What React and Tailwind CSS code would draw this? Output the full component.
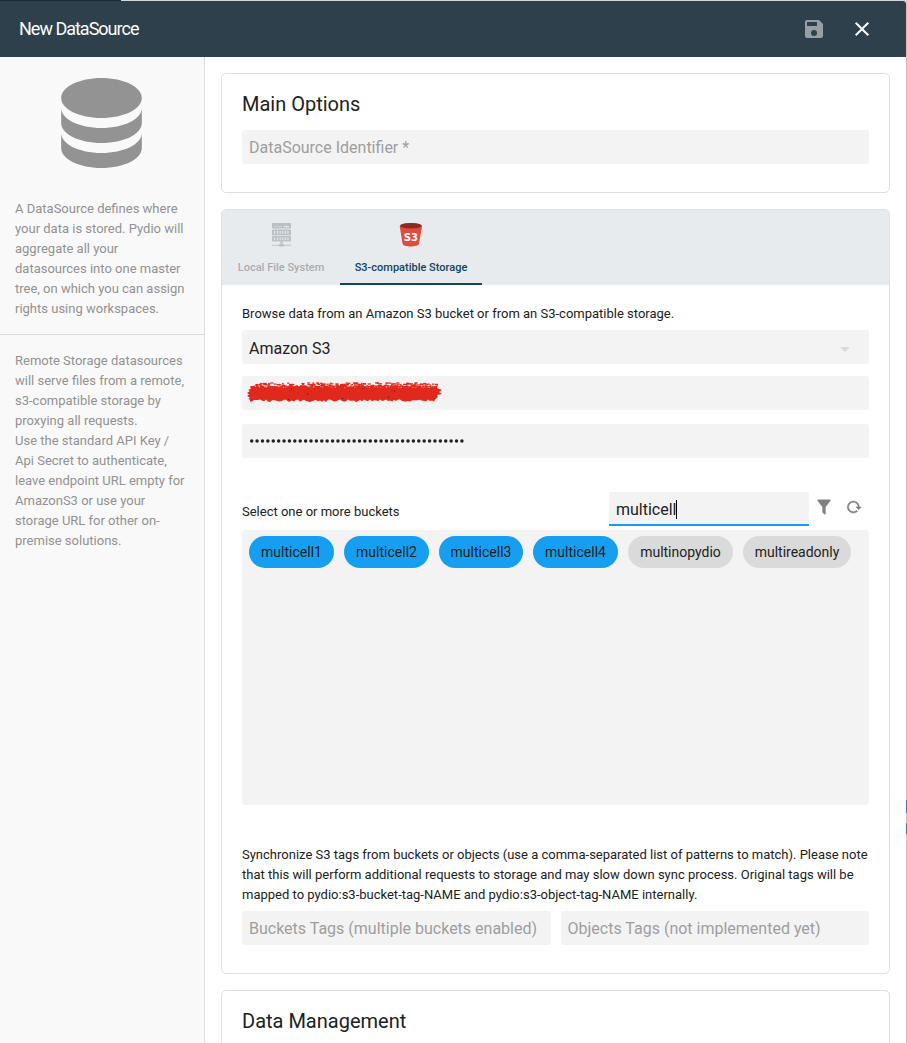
const MDI = {
  database:
    'M12 3C7.58 3 4 4.79 4 7s3.58 4 8 4 8-1.79 8-4-3.58-4-8-4M4 9v3c0 2.21 3.58 4 8 4s8-1.79 8-4V9c0 2.21-3.58 4-8 4s-8-1.79-8-4m0 5v3c0 2.21 3.58 4 8 4s8-1.79 8-4v-3c0 2.21-3.58 4-8 4s-8-1.79-8-4z',
  save: 'M15 9H5V5h10m-3 14a3 3 0 0 1-3-3 3 3 0 0 1 3-3 3 3 0 0 1 3 3 3 3 0 0 1-3 3m5-16H5a2 2 0 0 0-2 2v14a2 2 0 0 0 2 2h14a2 2 0 0 0 2-2V7l-4-4z',
  close:
    'M19 6.41L17.59 5 12 10.59 6.41 5 5 6.41 10.59 12 5 17.59 6.41 19 12 13.41 17.59 19 19 17.59 13.41 12z',
  filter:
    'M14 12v7.88c.04.3-.06.62-.29.83a.996.996 0 0 1-1.41 0l-2.01-2.01a.989.989 0 0 1-.29-.83V12h-.03L4.21 4.62a1 1 0 0 1 .17-1.4c.19-.14.4-.22.62-.22h14c.22 0 .43.08.62.22a1 1 0 0 1 .17 1.4L14.03 12z',
  reload:
    'M2 12a9 9 0 0 0 9 9c2.39 0 4.68-.94 6.4-2.6l-1.5-1.5A6.706 6.706 0 0 1 11 19c-6.24 0-9.36-7.54-4.95-11.95C10.46 2.64 18 5.77 18 12h-3l4 4h.1l3.9-4h-3a9 9 0 0 0-18 0z',
  menuDown: 'M7 10l5 5 5-5z',
};

function Icon({ name, className }) {
  return (
    <svg viewBox="0 0 24 24" fill="currentColor" className={className}>
      <path d={MDI[name]} />
    </svg>
  );
}

function ServerIcon() {
  return (
    <svg viewBox="0 0 20 25" className="h-[25px] w-5 text-[#b9c1c6]">
      <g fill="currentColor">
        <rect x="1" y="1" width="19" height="5.6" rx="0.8" />
        <rect x="1" y="7.4" width="19" height="5.8" rx="0.8" />
        <rect x="1" y="14" width="19" height="5.6" rx="0.8" />
        <rect x="9.5" y="19" width="2" height="4" />
        <rect x="1" y="22.8" width="19" height="0.9" />
        <rect x="8" y="22" width="5" height="2.6" rx="1" />
      </g>
      <g fill="#e8ebee">
        <rect x="3" y="4.3" width="8" height="0.4" />
        <rect x="13" y="4" width="5" height="1.2" />
        {[3, 6, 8.6, 11.2, 13.8, 16.4].map((x) => (
          <g key={x}>
            <rect x={x} y="9" width="1.1" height="2.8" />
            <rect x={x} y="15.4" width="1.1" height="2.8" />
          </g>
        ))}
      </g>
    </svg>
  );
}

function BucketIcon() {
  return (
    <svg viewBox="0 0 24 25" className="h-[25px] w-6">
      <path d="M0.7 4.2 L3.6 21.8 C4 25.4 19.4 25.4 20 21.8 L23 4.2z" fill="#e04b3e" />
      <ellipse cx="11.9" cy="4" rx="11.2" ry="3" fill="#e04b3e" />
      <ellipse cx="11.9" cy="3.8" rx="10.8" ry="2.8" fill="#8a2b23" />
      <text
        x="12"
        y="18.6"
        textAnchor="middle"
        textLength="14.4"
        lengthAdjust="spacingAndGlyphs"
        className="fill-white font-['DejaVu_Sans'] text-[11px] font-bold"
      >
        S3
      </text>
    </svg>
  );
}

// Deterministic noise, so the strokes stay the same on every render.
const noise = (n) => {
  const v = Math.sin(n * 127.1 + 11.7) * 43758.5453;
  return v - Math.floor(v);
};

function Redaction() {
  const top = [];
  const bottom = [];
  for (let i = 0; i <= 92; i++) {
    const x = 4 + i * 2;
    top.push(`${x},${(2.4 + noise(i) * 2.2).toFixed(1)}`);
    bottom.unshift(`${(x - 1).toFixed(1)},${(17.4 + noise(i + 200) * 2.6).toFixed(1)}`);
  }
  const right = '191,3 190,6 195,8 192,10 195,12 190,13 191,15 188,17.5';
  const left = '3,18 1.5,17 3,15.5 0,14 2,12.5 0,11 3,9 1,8 4,6.5 3,5';
  return (
    <svg viewBox="0 0 195 22" className="h-[22px] w-[195px]">
      <polygon points={`${top.join(' ')} ${right} ${bottom.join(' ')} ${left}`} fill="#e0281c" />
      {Array.from({ length: 120 }, (_, i) => (
        <rect
          key={i}
          x={5 + noise(i + 400) * 184}
          y={0.3 + noise(i + 600) * 2.4}
          width={1.5 + noise(i + 700) * 2}
          height="1.2"
          fill="#e0281c"
        />
      ))}
      {Array.from({ length: 50 }, (_, i) => (
        <rect
          key={i}
          x={6 + noise(i + 800) * 180}
          y={3.2 + noise(i + 900) * 2.2}
          width="1"
          height="0.8"
          fill="#f6b5b0"
        />
      ))}
      {[[44, 6.5], [60, 11.5], [41, 17], [95, 16], [147, 8.5], [141, 14.8], [115, 5.5]].map(([x, y]) => (
        <rect key={x} x={x} y={y} width="1.1" height="1.1" fill="#5b1714" />
      ))}
    </svg>
  );
}

function Card({ className = '', children }) {
  return (
    <section className={`overflow-hidden rounded-[5px] border border-[#e0e0e0] bg-white ${className}`}>
      {children}
    </section>
  );
}

function Field({ className = '', children }) {
  return (
    <div className={`flex h-[34px] items-center rounded-[3px] bg-[#f3f3f3] px-[7px] text-base ${className}`}>
      {children}
    </div>
  );
}

const BUCKETS = [
  { name: 'multicell1', selected: true, width: 'w-[85px]' },
  { name: 'multicell2', selected: true, width: 'w-[85px]' },
  { name: 'multicell3', selected: true, width: 'w-[84px]' },
  { name: 'multicell4', selected: true, width: 'w-[85px]' },
  { name: 'multinopydio', selected: false, width: 'w-[105px]' },
  { name: 'multireadonly', selected: false, width: 'w-[108px]' },
];

export default function App() {
  return (
    <div className="flex h-[1043px] w-[907px] flex-col overflow-hidden bg-white font-[Roboto,sans-serif] text-[#212121]">
      <div className="flex h-px shrink-0 bg-[#d3d6d8]">
        <div className="w-[121px] bg-[#1a2b38]" />
      </div>
      <div className="flex min-h-0 flex-1">
        <div className="flex w-[906px] flex-col">
          <header className="flex h-14 shrink-0 items-center rounded-tr-[3px] bg-[#2e404b] pr-8 pl-[19px] text-white">
            <h1 className="flex-1 pb-px text-[18px] tracking-[-1px]">New DataSource</h1>
            <Icon name="save" className="mr-6 size-6 text-[#979fa5]" />
            <Icon name="close" className="size-6" />
          </header>

          <div className="flex min-h-0 flex-1">
            <aside className="w-[205px] shrink-0 border-r border-[#dcdcdc] bg-[#f9f9f9] text-[13px] leading-5 whitespace-nowrap text-[#929292]">
              <svg viewBox="0 0 24 24" preserveAspectRatio="none" className="mt-[6px] ml-[41px] h-[120px] w-[121px] fill-[#939393]">
                <path d={MDI.database} />
              </svg>
              <p className="mt-4 border-b border-[#dcdcdc] px-[15px] pb-[15px]">
                A DataSource defines where<br />your data is stored. Pydio will<br />aggregate all your<br />
                datasources into one master<br />tree, on which you can assign<br />rights using workspaces.
              </p>
              <p className="px-[15px] pt-4">
                Remote Storage datasources<br />will serve files from a remote,<br />s3-compatible storage by<br />
                proxying all requests.<br />Use the standard API Key /<br />Api Secret to authenticate,<br />
                leave endpoint URL empty for<br />AmazonS3 or use your<br />storage URL for other on-<br />
                premise solutions.
              </p>
            </aside>

            <main className="flex min-w-0 flex-1 flex-col gap-4 px-4 pt-4">
              <Card className="h-[120px] shrink-0 px-5 pt-[17px]">
                <h2 className="text-[20px] leading-[26px]">Main Options</h2>
                <Field className="mt-[13px] pt-px text-[#9e9e9e]">DataSource Identifier *</Field>
              </Card>

              <Card className="h-[765px] shrink-0">
                <div className="flex h-[75px] bg-[#e8ebee] text-[11px] font-medium">
                  <div className="flex w-[118px] flex-col items-center pt-3 text-[#a9adb1]">
                    <ServerIcon />
                    <span className="mt-[13px] leading-4">Local File System</span>
                  </div>
                  <div className="flex w-[142px] flex-col items-center border-b-2 border-[#134462] pt-3 text-[#134462]">
                    <BucketIcon />
                    <span className="mt-[13px] leading-4">S3-compatible Storage</span>
                  </div>
                </div>

                <div className="px-5 pt-[19px] text-[13px] leading-5">
                  <p>Browse data from an Amazon S3 bucket or from an S3-compatible storage.</p>
                  <Field className="mt-[6px] justify-between pr-3">
                    <span className="pt-[3px]">Amazon S3</span>
                    <Icon name="menuDown" className="mt-1 size-6 text-[#dadada]" />
                  </Field>
                  <Field className="mt-3 pl-[5px]">
                    <Redaction />
                  </Field>
                  <Field className="mt-[14px]">
                    <svg viewBox="0 0 216 6" className="h-[6px] w-[216px] fill-[#212121]">
                      {Array.from({ length: 40 }, (_, i) => (
                        <circle key={i} cx={2.7 + i * 5.39} cy="3" r="1.75" />
                      ))}
                    </svg>
                  </Field>

                  <div className="mt-[34px] flex h-[34px]">
                    <span className="w-[367px] pt-[10px]">Select one or more buckets</span>
                    <div className="flex w-[200px] items-center rounded-t-[3px] border-b-2 border-[#169bf0] bg-[#f3f3f3] pt-[3px] pl-[7px] text-base">
                      <span>multicell</span>
                      <span className="-ml-px h-[19px] w-px bg-black" />
                    </div>
                    <Icon name="filter" className="mt-[5px] ml-[5px] size-5 text-[#808080]" />
                    <Icon
                      name="reload"
                      className="mt-[7px] ml-[12px] size-4 stroke-current stroke-[0.8] text-[#808080]"
                    />
                  </div>

                  <div className="mt-1 flex h-[275px] items-start gap-[10px] rounded-[4px] bg-[#f3f3f3] px-[7px] pt-[6px]">
                    {BUCKETS.map((b) => (
                      <span
                        key={b.name}
                        className={`flex h-8 shrink-0 items-center justify-center rounded-full text-sm ${b.width} ${
                          b.selected ? 'bg-[#169ff1]' : 'bg-[#dadada]'
                        }`}
                      >
                        {b.name}
                      </span>
                    ))}
                  </div>

                  <p className="mt-10 whitespace-nowrap">
                    Synchronize S3 tags from buckets or objects (use a comma-separated list of patterns to match). Please note
                    <br />
                    that this will perform additional requests to storage and may slow down sync process. Original tags will be
                    <br />
                    mapped to pydio:s3-bucket-tag-NAME and pydio:s3-object-tag-NAME internally.
                  </p>
                  <div className="mt-[6px] flex gap-[10px] text-[#9e9e9e]">
                    <Field className="w-[309px] pt-[2px]">Buckets Tags (multiple buckets enabled)</Field>
                    <Field className="w-[308px] pt-[2px] pl-[6.5px]">Objects Tags (not implemented yet)</Field>
                  </div>
                </div>
              </Card>

              <Card className="h-[120px] shrink-0 px-5 pt-[17px]">
                <h2 className="text-[20px] leading-[26px]">Data Management</h2>
              </Card>
            </main>
          </div>
        </div>
        <div className="flex w-px flex-col bg-[#c4c4c4]">
          <div className="mt-[799px] h-[13px] bg-[#0f86d0]" />
          <div className="mt-[10px] h-[11px] bg-[#0f86d0]" />
        </div>
      </div>
    </div>
  );
}
